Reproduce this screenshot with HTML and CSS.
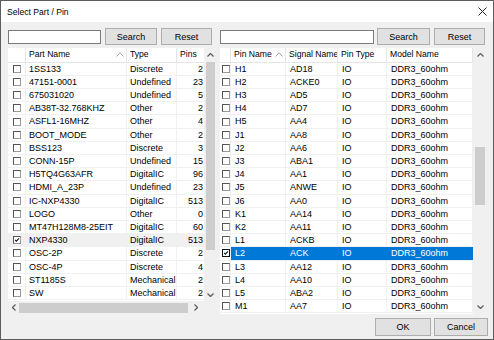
FILE: index.html
```html
<!DOCTYPE html>
<html lang="en">
<head>
    <meta charset="UTF-8">
    <title>Select Part / Pin</title>
    <link rel="stylesheet" href="styles.css">
</head>
<body>
    <div class="dialog">
        <div class="titlebar">
            <span class="title">Select Part / Pin</span>
            <svg class="close" viewBox="0 0 9 9"><path d="M0.5 0.5 L8.5 8.5 M8.5 0.5 L0.5 8.5"/></svg>
        </div>

        <div class="dialog-body">
            <div class="panels">
                <!-- parts -->
                <section class="panel">
                    <div class="toolbar">
                        <input class="search-box parts-search" type="text">
                        <button class="btn btn-search">Search</button>
                        <button class="btn btn-reset">Reset</button>
                    </div>
                    <div class="listview parts-view">
                        <div class="list-area">
                            <div class="list-head parts-cols">
                                <div class="hcell"></div>
                                <div class="hcell sorted">Part Name<svg class="sort" viewBox="0 0 8 5"><polyline points="0.5,4.5 4,0.8 7.5,4.5"/></svg></div>
                                <div class="hcell">Type</div>
                                <div class="hcell">Pins</div>
                            </div>
                            <div class="list-row parts-cols"><div class="cell cell-check"><span class="check"></span></div><div class="cell">1SS133</div><div class="cell">Discrete</div><div class="cell num">2</div></div>
                            <div class="list-row parts-cols"><div class="cell cell-check"><span class="check"></span></div><div class="cell">47151-0001</div><div class="cell">Undefined</div><div class="cell num">23</div></div>
                            <div class="list-row parts-cols"><div class="cell cell-check"><span class="check"></span></div><div class="cell">675031020</div><div class="cell">Undefined</div><div class="cell num">5</div></div>
                            <div class="list-row parts-cols"><div class="cell cell-check"><span class="check"></span></div><div class="cell">AB38T-32.768KHZ</div><div class="cell">Other</div><div class="cell num">2</div></div>
                            <div class="list-row parts-cols"><div class="cell cell-check"><span class="check"></span></div><div class="cell">ASFL1-16MHZ</div><div class="cell">Other</div><div class="cell num">4</div></div>
                            <div class="list-row parts-cols"><div class="cell cell-check"><span class="check"></span></div><div class="cell">BOOT_MODE</div><div class="cell">Other</div><div class="cell num">2</div></div>
                            <div class="list-row parts-cols"><div class="cell cell-check"><span class="check"></span></div><div class="cell">BSS123</div><div class="cell">Discrete</div><div class="cell num">3</div></div>
                            <div class="list-row parts-cols"><div class="cell cell-check"><span class="check"></span></div><div class="cell">CONN-15P</div><div class="cell">Undefined</div><div class="cell num">15</div></div>
                            <div class="list-row parts-cols"><div class="cell cell-check"><span class="check"></span></div><div class="cell">H5TQ4G63AFR</div><div class="cell">DigitalIC</div><div class="cell num">96</div></div>
                            <div class="list-row parts-cols"><div class="cell cell-check"><span class="check"></span></div><div class="cell">HDMI_A_23P</div><div class="cell">Undefined</div><div class="cell num">23</div></div>
                            <div class="list-row parts-cols"><div class="cell cell-check"><span class="check"></span></div><div class="cell">IC-NXP4330</div><div class="cell">DigitalIC</div><div class="cell num">513</div></div>
                            <div class="list-row parts-cols"><div class="cell cell-check"><span class="check"></span></div><div class="cell">LOGO</div><div class="cell">Other</div><div class="cell num">0</div></div>
                            <div class="list-row parts-cols"><div class="cell cell-check"><span class="check"></span></div><div class="cell">MT47H128M8-25EIT</div><div class="cell">DigitalIC</div><div class="cell num">60</div></div>
                            <div class="list-row parts-cols is-inactive"><div class="cell cell-check"><span class="check"><svg viewBox="0 0 8 8"><polyline points="1.5,3.8 3.2,5.6 6.6,1.8"/></svg></span></div><div class="cell">NXP4330</div><div class="cell">DigitalIC</div><div class="cell num">513</div></div>
                            <div class="list-row parts-cols"><div class="cell cell-check"><span class="check"></span></div><div class="cell">OSC-2P</div><div class="cell">Discrete</div><div class="cell num">2</div></div>
                            <div class="list-row parts-cols"><div class="cell cell-check"><span class="check"></span></div><div class="cell">OSC-4P</div><div class="cell">Discrete</div><div class="cell num">4</div></div>
                            <div class="list-row parts-cols"><div class="cell cell-check"><span class="check"></span></div><div class="cell">ST1185S</div><div class="cell">Mechanical</div><div class="cell num">2</div></div>
                            <div class="list-row parts-cols"><div class="cell cell-check"><span class="check"></span></div><div class="cell">SW</div><div class="cell">Mechanical</div><div class="cell num">2</div></div>
                        </div>
                        <div class="vscroll">
                            <div class="arrow arrow-up"><svg viewBox="0 0 7 4"><polyline points="0.5,3.5 3.5,0.5 6.5,3.5"/></svg></div>
                            <div class="track"><div class="thumb" style="margin-top:0;height:188px"></div></div>
                            <div class="arrow arrow-down"><svg viewBox="0 0 7 4"><polyline points="0.5,0.5 3.5,3.5 6.5,0.5"/></svg></div>
                        </div>
                        <div class="hscroll">
                            <div class="arrow arrow-left"><svg viewBox="0 0 4 7"><polyline points="3.5,0.5 0.5,3.5 3.5,6.5"/></svg></div>
                            <div class="track"><div class="thumb" style="margin-left:0;width:169px"></div></div>
                            <div class="arrow arrow-right"><svg viewBox="0 0 4 7"><polyline points="0.5,0.5 3.5,3.5 0.5,6.5"/></svg></div>
                        </div>
                        <div class="corner"></div>
                    </div>
                </section>

                <!-- pins -->
                <section class="panel">
                    <div class="toolbar">
                        <input class="search-box pins-search" type="text">
                        <button class="btn btn-search pins-btn-search">Search</button>
                        <button class="btn btn-reset">Reset</button>
                    </div>
                    <div class="listview pins-view">
                        <div class="list-area">
                            <div class="list-head pins-cols">
                                <div class="hcell"></div>
                                <div class="hcell sorted">Pin Name<svg class="sort" viewBox="0 0 8 5"><polyline points="0.5,4.5 4,0.8 7.5,4.5"/></svg></div>
                                <div class="hcell">Signal Name</div>
                                <div class="hcell">Pin Type</div>
                                <div class="hcell">Model Name</div>
                            </div>
                            <div class="list-row pins-cols"><div class="cell cell-check"><span class="check"></span></div><div class="cell">H1</div><div class="cell">AD18</div><div class="cell">IO</div><div class="cell">DDR3_60ohm</div></div>
                            <div class="list-row pins-cols"><div class="cell cell-check"><span class="check"></span></div><div class="cell">H2</div><div class="cell">ACKE0</div><div class="cell">IO</div><div class="cell">DDR3_60ohm</div></div>
                            <div class="list-row pins-cols"><div class="cell cell-check"><span class="check"></span></div><div class="cell">H3</div><div class="cell">AD5</div><div class="cell">IO</div><div class="cell">DDR3_60ohm</div></div>
                            <div class="list-row pins-cols"><div class="cell cell-check"><span class="check"></span></div><div class="cell">H4</div><div class="cell">AD7</div><div class="cell">IO</div><div class="cell">DDR3_60ohm</div></div>
                            <div class="list-row pins-cols"><div class="cell cell-check"><span class="check"></span></div><div class="cell">H5</div><div class="cell">AA4</div><div class="cell">IO</div><div class="cell">DDR3_60ohm</div></div>
                            <div class="list-row pins-cols"><div class="cell cell-check"><span class="check"></span></div><div class="cell">J1</div><div class="cell">AA8</div><div class="cell">IO</div><div class="cell">DDR3_60ohm</div></div>
                            <div class="list-row pins-cols"><div class="cell cell-check"><span class="check"></span></div><div class="cell">J2</div><div class="cell">AA6</div><div class="cell">IO</div><div class="cell">DDR3_60ohm</div></div>
                            <div class="list-row pins-cols"><div class="cell cell-check"><span class="check"></span></div><div class="cell">J3</div><div class="cell">ABA1</div><div class="cell">IO</div><div class="cell">DDR3_60ohm</div></div>
                            <div class="list-row pins-cols"><div class="cell cell-check"><span class="check"></span></div><div class="cell">J4</div><div class="cell">AA1</div><div class="cell">IO</div><div class="cell">DDR3_60ohm</div></div>
                            <div class="list-row pins-cols"><div class="cell cell-check"><span class="check"></span></div><div class="cell">J5</div><div class="cell">ANWE</div><div class="cell">IO</div><div class="cell">DDR3_60ohm</div></div>
                            <div class="list-row pins-cols"><div class="cell cell-check"><span class="check"></span></div><div class="cell">J6</div><div class="cell">AA0</div><div class="cell">IO</div><div class="cell">DDR3_60ohm</div></div>
                            <div class="list-row pins-cols"><div class="cell cell-check"><span class="check"></span></div><div class="cell">K1</div><div class="cell">AA14</div><div class="cell">IO</div><div class="cell">DDR3_60ohm</div></div>
                            <div class="list-row pins-cols"><div class="cell cell-check"><span class="check"></span></div><div class="cell">K2</div><div class="cell">AA11</div><div class="cell">IO</div><div class="cell">DDR3_60ohm</div></div>
                            <div class="list-row pins-cols"><div class="cell cell-check"><span class="check"></span></div><div class="cell">L1</div><div class="cell">ACKB</div><div class="cell">IO</div><div class="cell">DDR3_60ohm</div></div>
                            <div class="list-row pins-cols is-selected"><div class="cell cell-check"><span class="check is-focused"><svg viewBox="0 0 8 8"><polyline points="1.5,3.8 3.2,5.6 6.6,1.8"/></svg></span></div><div class="cell">L2</div><div class="cell">ACK</div><div class="cell">IO</div><div class="cell">DDR3_60ohm</div></div>
                            <div class="list-row pins-cols"><div class="cell cell-check"><span class="check"></span></div><div class="cell">L3</div><div class="cell">AA12</div><div class="cell">IO</div><div class="cell">DDR3_60ohm</div></div>
                            <div class="list-row pins-cols"><div class="cell cell-check"><span class="check"></span></div><div class="cell">L4</div><div class="cell">AA10</div><div class="cell">IO</div><div class="cell">DDR3_60ohm</div></div>
                            <div class="list-row pins-cols"><div class="cell cell-check"><span class="check"></span></div><div class="cell">L5</div><div class="cell">ABA2</div><div class="cell">IO</div><div class="cell">DDR3_60ohm</div></div>
                            <div class="list-row pins-cols"><div class="cell cell-check"><span class="check"></span></div><div class="cell">M1</div><div class="cell">AA7</div><div class="cell">IO</div><div class="cell">DDR3_60ohm</div></div>
                        </div>
                        <div class="vscroll">
                            <div class="arrow arrow-up"><svg viewBox="0 0 7 4"><polyline points="0.5,3.5 3.5,0.5 6.5,3.5"/></svg></div>
                            <div class="track"><div class="thumb" style="margin-top:85px;height:58px"></div></div>
                            <div class="arrow arrow-down"><svg viewBox="0 0 7 4"><polyline points="0.5,0.5 3.5,3.5 6.5,0.5"/></svg></div>
                        </div>
                    </div>
                </section>
            </div>

            <div class="footer">
                <button class="btn btn-ok">OK</button>
                <button class="btn btn-cancel">Cancel</button>
            </div>
        </div>
    </div>
</body>
</html>
```

FILE: styles.css
```css
* {
    box-sizing: border-box;
}

body {
    margin: 0;
    background: #ffffff;
    font-family: "Liberation Sans", Arial, sans-serif;
    font-size: 9px;
    color: #000000;
}

.dialog {
    width: 494px;
    height: 340px;
    border: 1px solid #5c5c5c;
    background: #f0f0f0;
    display: flex;
    flex-direction: column;
}

.titlebar {
    height: 21px;
    flex: none;
    background: #ffffff;
    display: flex;
    align-items: center;
    justify-content: space-between;
    padding: 0 6px 0 6px;
}

.title {
    font-size: 8.6px;
    color: #000;
}

.close {
    width: 9px;
    height: 9px;
}

.close path {
    stroke: #222;
    stroke-width: 1;
    fill: none;
}

.dialog-body {
    flex: 1;
    padding: 6px 5px 0 7px;
    display: flex;
    flex-direction: column;
}

.panels {
    display: grid;
    grid-template-columns: 209px 267px;
    gap: 3px;
}

.panel {
    display: flex;
    flex-direction: column;
}

/* search row */
.toolbar {
    height: 17px;
    display: flex;
    align-items: center;
}

.search-box {
    height: 14px;
    margin: 0;
    padding: 0 2px;
    border: 1px solid #7a7a7a;
    background: #fff;
    font: inherit;
}

.parts-search {
    width: 93px;
}

.pins-search {
    width: 154px;
}

.btn {
    height: 17px;
    margin: 0;
    padding: 0;
    border: 1px solid #adadad;
    background: #e1e1e1;
    font-family: inherit;
    font-size: 9px;
    color: #000;
}

.btn-search {
    width: 52px;
    margin-left: 4px;
}

.pins-btn-search {
    width: 53px;
    margin-left: 3px;
}

.btn-reset {
    width: 51px;
    margin-left: 4px;
}

/* list views */
.listview {
    margin-top: 3px;
    display: grid;
    background: #f0f0f0;
}

.parts-view {
    height: 266px;
    grid-template-columns: 196px 13px;
    grid-template-rows: 253px 13px;
}

.pins-view {
    height: 265.5px;
    grid-template-columns: 253px 14px;
    grid-template-rows: 265.5px;
}

.list-area {
    background: #ffffff;
    overflow: hidden;
}

.parts-cols {
    display: grid;
    grid-template-columns: 18px 101px 50px 30px;
    width: 199px;
}

.pins-cols {
    display: grid;
    grid-template-columns: 11px 55px 52px 49px 86px;
}

.list-head {
    height: 14.7px;
    border-bottom: 1px solid #e5e5e5;
}

.hcell {
    border-right: 1px solid #e5e5e5;
    padding: 0 2px 0 3px;
    font-size: 8.6px;
    line-height: 13px;
    white-space: nowrap;
    overflow: hidden;
    display: flex;
    align-items: center;
    justify-content: space-between;
}

.sort {
    width: 8px;
    height: 5px;
    margin-bottom: 1px;
}

.sort polyline {
    fill: none;
    stroke: #9a9a9a;
    stroke-width: 0.9;
}

.list-row {
    height: 13.2px;
    border-bottom: 1px solid #f0f0f0;
}

.cell {
    border-right: 1px solid #f0f0f0;
    padding: 0 3px;
    line-height: 12px;
    white-space: nowrap;
    overflow: hidden;
}

.pins-cols .cell {
    padding-left: 4px;
}

.cell.num {
    text-align: right;
    padding-right: 3px;
}

.cell-check {
    display: flex;
    align-items: center;
    padding: 0 0 0 5px;
}

.pins-cols .cell-check {
    padding-left: 2px;
    background: #fff;
}

.check {
    width: 8px;
    height: 8px;
    border: 1px solid #555;
    border-right-color: #9a9a9a;
    border-bottom-color: #9a9a9a;
    background: #fff;
    display: block;
}

.check svg {
    display: block;
    width: 6px;
    height: 6px;
}

.check polyline {
    fill: none;
    stroke: #111;
    stroke-width: 1.4;
}

.check.is-focused {
    border-color: #111;
}

.is-inactive {
    background: #f0f0f0;
}

.is-selected {
    background: #0078d7;
    color: #ffffff;
}

.is-selected .cell {
    border-right-color: #0078d7;
}

.is-selected .cell-check {
    border-right-color: #f0f0f0;
}

/* scrollbars */
.vscroll {
    display: flex;
    flex-direction: column;
    background: #f0f0f0;
}

.vscroll .arrow {
    height: 14px;
    display: flex;
    align-items: center;
    justify-content: center;
}

.vscroll .arrow-down {
    height: 13px;
}

.pins-view .vscroll .arrow-down {
    height: 13.5px;
}

.vscroll .arrow svg {
    width: 7px;
    height: 4px;
}

.vscroll .track {
    flex: 1;
    padding: 0 2px;
}

.vscroll .thumb {
    background: #cdcdcd;
}

.hscroll {
    display: flex;
    background: #f0f0f0;
}

.hscroll .arrow {
    width: 11px;
    display: flex;
    align-items: center;
    justify-content: center;
}

.hscroll .arrow-right {
    width: 16px;
}

.hscroll .arrow svg {
    width: 4px;
    height: 7px;
}

.hscroll .track {
    flex: 1;
    padding: 1.5px 0;
}

.hscroll .thumb {
    height: 100%;
    background: #cdcdcd;
}

.arrow polyline {
    fill: none;
    stroke: #606060;
    stroke-width: 1.3;
}

.corner {
    background: #f0f0f0;
}

/* dialog buttons */
.footer {
    margin-top: 4px;
    display: flex;
    justify-content: flex-end;
    gap: 3px;
}

.btn-ok {
    width: 56px;
    height: 18px;
}

.btn-cancel {
    width: 54px;
    height: 18px;
}
```
